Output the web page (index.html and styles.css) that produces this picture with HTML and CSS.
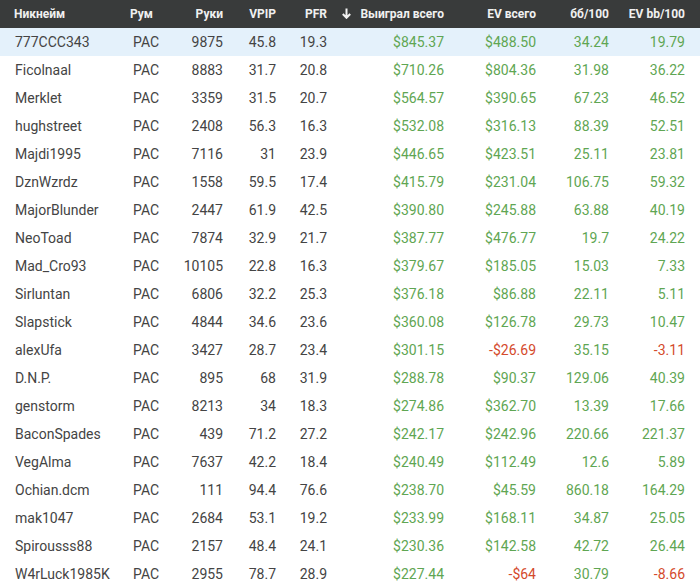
FILE: index.html
```html
<!DOCTYPE html>
<html>
<head>
<meta charset="utf-8">
<link rel="stylesheet" href="styles.css">
</head>
<body>
<table class="stats">
  <colgroup>
    <col class="w-nick"><col class="w-room"><col class="w-hands"><col class="w-vpip"><col class="w-pfr"><col class="w-won"><col class="w-ev"><col class="w-bb"><col class="w-evbb">
  </colgroup>
  <thead>
    <tr>
      <th class="l first">Никнейм</th>
      <th class="l">Рум</th>
      <th>Руки</th>
      <th>VPIP</th>
      <th>PFR</th>
      <th><span class="sort"><svg width="9" height="11" viewBox="0 0 9 11"><path d="M4.5 0.5 V9.5 M0.8 6 L4.5 9.8 L8.2 6" fill="none" stroke="#f2f2f2" stroke-width="2"/></svg></span>Выиграл всего</th>
      <th>EV всего</th>
      <th>бб/100</th>
      <th class="last">EV bb/100</th>
    </tr>
  </thead>
  <tbody>
    <tr class="active"><td class="l first">777CCC343</td><td class="l room">PAC</td><td>9875</td><td>45.8</td><td>19.3</td><td class="g">$845.37</td><td class="g">$488.50</td><td class="g">34.24</td><td class="g last">19.79</td></tr>
    <tr><td class="l first">Ficolnaal</td><td class="l room">PAC</td><td>8883</td><td>31.7</td><td>20.8</td><td class="g">$710.26</td><td class="g">$804.36</td><td class="g">31.98</td><td class="g last">36.22</td></tr>
    <tr><td class="l first">Merklet</td><td class="l room">PAC</td><td>3359</td><td>31.5</td><td>20.7</td><td class="g">$564.57</td><td class="g">$390.65</td><td class="g">67.23</td><td class="g last">46.52</td></tr>
    <tr><td class="l first">hughstreet</td><td class="l room">PAC</td><td>2408</td><td>56.3</td><td>16.3</td><td class="g">$532.08</td><td class="g">$316.13</td><td class="g">88.39</td><td class="g last">52.51</td></tr>
    <tr><td class="l first">Majdi1995</td><td class="l room">PAC</td><td>7116</td><td>31</td><td>23.9</td><td class="g">$446.65</td><td class="g">$423.51</td><td class="g">25.11</td><td class="g last">23.81</td></tr>
    <tr><td class="l first">DznWzrdz</td><td class="l room">PAC</td><td>1558</td><td>59.5</td><td>17.4</td><td class="g">$415.79</td><td class="g">$231.04</td><td class="g">106.75</td><td class="g last">59.32</td></tr>
    <tr><td class="l first">MajorBlunder</td><td class="l room">PAC</td><td>2447</td><td>61.9</td><td>42.5</td><td class="g">$390.80</td><td class="g">$245.88</td><td class="g">63.88</td><td class="g last">40.19</td></tr>
    <tr><td class="l first">NeoToad</td><td class="l room">PAC</td><td>7874</td><td>32.9</td><td>21.7</td><td class="g">$387.77</td><td class="g">$476.77</td><td class="g">19.7</td><td class="g last">24.22</td></tr>
    <tr><td class="l first">Mad_Cro93</td><td class="l room">PAC</td><td>10105</td><td>22.8</td><td>16.3</td><td class="g">$379.67</td><td class="g">$185.05</td><td class="g">15.03</td><td class="g last">7.33</td></tr>
    <tr><td class="l first">Sirluntan</td><td class="l room">PAC</td><td>6806</td><td>32.2</td><td>25.3</td><td class="g">$376.18</td><td class="g">$86.88</td><td class="g">22.11</td><td class="g last">5.11</td></tr>
    <tr><td class="l first">Slapstick</td><td class="l room">PAC</td><td>4844</td><td>34.6</td><td>23.6</td><td class="g">$360.08</td><td class="g">$126.78</td><td class="g">29.73</td><td class="g last">10.47</td></tr>
    <tr><td class="l first">alexUfa</td><td class="l room">PAC</td><td>3427</td><td>28.7</td><td>23.4</td><td class="g">$301.15</td><td class="r">-$26.69</td><td class="g">35.15</td><td class="r last">-3.11</td></tr>
    <tr><td class="l first">D.N.P.</td><td class="l room">PAC</td><td>895</td><td>68</td><td>31.9</td><td class="g">$288.78</td><td class="g">$90.37</td><td class="g">129.06</td><td class="g last">40.39</td></tr>
    <tr><td class="l first">genstorm</td><td class="l room">PAC</td><td>8213</td><td>34</td><td>18.3</td><td class="g">$274.86</td><td class="g">$362.70</td><td class="g">13.39</td><td class="g last">17.66</td></tr>
    <tr><td class="l first">BaconSpades</td><td class="l room">PAC</td><td>439</td><td>71.2</td><td>27.2</td><td class="g">$242.17</td><td class="g">$242.96</td><td class="g">220.66</td><td class="g last">221.37</td></tr>
    <tr><td class="l first">VegAlma</td><td class="l room">PAC</td><td>7637</td><td>42.2</td><td>18.4</td><td class="g">$240.49</td><td class="g">$112.49</td><td class="g">12.6</td><td class="g last">5.89</td></tr>
    <tr><td class="l first">Ochian.dcm</td><td class="l room">PAC</td><td>111</td><td>94.4</td><td>76.6</td><td class="g">$238.70</td><td class="g">$45.59</td><td class="g">860.18</td><td class="g last">164.29</td></tr>
    <tr><td class="l first">mak1047</td><td class="l room">PAC</td><td>2684</td><td>53.1</td><td>19.2</td><td class="g">$233.99</td><td class="g">$168.11</td><td class="g">34.87</td><td class="g last">25.05</td></tr>
    <tr><td class="l first">Spirousss88</td><td class="l room">PAC</td><td>2157</td><td>48.4</td><td>24.1</td><td class="g">$230.36</td><td class="g">$142.58</td><td class="g">42.72</td><td class="g last">26.44</td></tr>
    <tr><td class="l first">W4rLuck1985K</td><td class="l room">PAC</td><td>2955</td><td>78.7</td><td>28.9</td><td class="g">$227.44</td><td class="r">-$64</td><td class="g">30.79</td><td class="r last">-8.66</td></tr>
  </tbody>
</table>
</body>
</html>
```
FILE: styles.css
```css
html, body {
  margin: 0;
  padding: 0;
  background: #ffffff;
}
body {
  font-family: Roboto, "Liberation Sans", Arial, sans-serif;
  color: #444444;
  overflow: hidden;
}
.stats {
  width: 700px;
  border-collapse: collapse;
  table-layout: fixed;
}
.w-nick { width: 120px; }
.w-room { width: 60px; }
.w-hands { width: 53px; }
.w-vpip { width: 53px; }
.w-pfr { width: 51px; }
.w-won { width: 117px; }
.w-ev { width: 92px; }
.w-bb { width: 73px; }
.w-evbb { width: 81px; }

.stats th {
  height: 28px;
  padding: 0 10px 0 0;
  background: #393b3b;
  color: #f0f0f0;
  font-size: 12px;
  font-weight: 700;
  text-align: right;
  white-space: nowrap;
  vertical-align: middle;
}
.stats td {
  height: 28px;
  padding: 0 10px 0 0;
  font-size: 14px;
  text-align: right;
  white-space: nowrap;
  vertical-align: middle;
}
.stats th.l, .stats td.l {
  text-align: left;
  padding: 0 0 0 10px;
}
.stats th.first { padding-left: 14px; }
.stats td.first { padding-left: 15px; }
.stats td.room { padding-left: 13px; }
.stats .last { padding-right: 15px; }
.active td { background: #e4f1fb; }
.g { color: #5fa653; }
.r { color: #d44a2c; }
.sort {
  display: inline-block;
  margin-right: 9px;
  vertical-align: -1px;
}
.sort svg { display: block; }
```
